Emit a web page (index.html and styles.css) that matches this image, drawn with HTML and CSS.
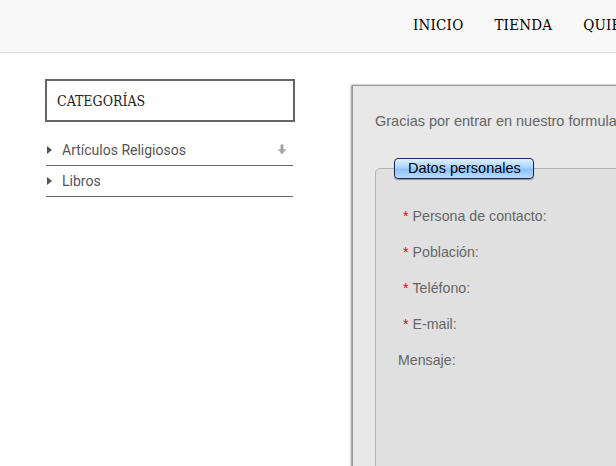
FILE: index.html
```html
<!DOCTYPE html>
<html lang="es">
<head>
<meta charset="utf-8">
<title>Contacto</title>
<link rel="stylesheet" href="styles.css">
</head>
<body>
<header class="top">
  <nav class="menu">
    <a href="#">INICIO</a>
    <a href="#">TIENDA</a>
    <a href="#">QUIÉNES SOMOS</a>
    <a href="#">CONTACTO</a>
  </nav>
</header>
<div class="page">
  <aside class="side">
    <div class="cat-title">CATEGORÍAS</div>
    <ul class="cat-list">
      <li class="cat-item">
        <span class="tri"></span>
        <span class="cat-name">Artículos Religiosos</span>
        <svg class="more" width="10" height="12" viewBox="0 0 10 12">
          <defs>
            <linearGradient id="g" x1="0" y1="0" x2="1" y2="0">
              <stop offset="0" stop-color="#c8c8c8"/>
              <stop offset="0.5" stop-color="#a0a0a0"/>
              <stop offset="1" stop-color="#c8c8c8"/>
            </linearGradient>
          </defs>
          <path d="M3.5 0.5 H6.5 V5 H9.5 L5 10.5 L0.5 5 H3.5 Z" fill="url(#g)"/>
        </svg>
      </li>
      <li class="cat-item">
        <span class="tri"></span>
        <span class="cat-name">Libros</span>
      </li>
    </ul>
  </aside>
  <main class="panel">
    <p class="intro">Gracias por entrar en nuestro formulario de contacto.</p>
    <section class="box">
      <div class="legend">Datos personales</div>
      <div class="rows">
        <div class="row req"><span class="star">*</span>Persona de contacto:</div>
        <div class="row req"><span class="star">*</span>Población:</div>
        <div class="row req"><span class="star">*</span>Teléfono:</div>
        <div class="row req"><span class="star">*</span>E-mail:</div>
        <div class="row">Mensaje:</div>
      </div>
    </section>
  </main>
</div>
</body>
</html>
```
FILE: styles.css
```css
html, body {
  margin: 0;
  padding: 0;
  background: #ffffff;
  overflow: hidden;
  width: 616px;
  height: 466px;
}

.top {
  height: 52px;
  background: #f8f8f8;
  border-bottom: 1px solid #d8d8d8;
  overflow: hidden;
}

.menu {
  display: flex;
  gap: 31px;
  padding-left: 413px;
  padding-top: 15px;
  white-space: nowrap;
}

.menu a {
  font-family: "DejaVu Serif", serif;
  font-stretch: condensed;
  font-size: 15px;
  line-height: 20px;
  letter-spacing: 0.2px;
  color: #000000;
  text-decoration: none;
}

.page {
  display: flex;
  align-items: flex-start;
  padding-left: 45px;
  padding-top: 26px;
  gap: 57px;
}

.side {
  width: 250px;
  flex: none;
}

.cat-title {
  border: 2px solid #666666;
  width: 250px;
  height: 43px;
  box-sizing: border-box;
  padding-left: 10px;
  padding-top: 1px;
  display: flex;
  align-items: center;
  font-family: "DejaVu Serif", serif;
  font-stretch: condensed;
  font-size: 14px;
  color: #222222;
}

.cat-list {
  list-style: none;
  margin: 13px 0 0 1px;
  padding: 0;
  width: 247px;
}

.cat-item {
  height: 30px;
  border-bottom: 1px solid #666666;
  display: flex;
  align-items: center;
  font-family: Roboto, "Liberation Sans", sans-serif;
  font-size: 14px;
  color: #555555;
}

.tri {
  width: 0;
  height: 0;
  border-top: 4px solid transparent;
  border-bottom: 4px solid transparent;
  border-left: 5px solid #555555;
  margin-left: 1px;
  margin-right: 10px;
}

.cat-name {
  flex: 1;
}

.more {
  margin-right: 6px;
  margin-top: -1px;
}

.panel {
  flex: none;
  width: 600px;
  height: 420px;
  margin-top: 6px;
  background: #e8e8e8;
  border: 1px solid #999999;
  box-shadow: -1px 0 2px rgba(0, 0, 0, 0.45);
  padding: 27px 0 0 22px;
  box-sizing: border-box;
  font-family: "Liberation Sans", Arial, sans-serif;
}

.intro {
  margin: 0;
  font-size: 14.5px;
  line-height: 16px;
  color: #666666;
  white-space: nowrap;
}

.box {
  margin-top: 39px;
  border: 1px solid #b4b4b4;
  border-radius: 5px;
  background: #e0e0e0;
  height: 400px;
}

.legend {
  width: fit-content;
  margin: -11px 0 0 18px;
  padding: 1px 12px 2px 13px;
  font-size: 14.5px;
  line-height: 16px;
  color: #000000;
  border: 1px solid #1c2a5a;
  border-radius: 4px;
  background: linear-gradient(#e0f0ff 0%, #a9d3ff 45%, #8cc2ff 55%, #b8dcff 100%);
  box-shadow: 0 1px 1px rgba(0, 0, 0, 0.35);
}

.rows {
  padding: 29px 0 0 22px;
}

.row {
  font-size: 14.2px;
  line-height: 16px;
  height: 36px;
  color: #666666;
  white-space: nowrap;
}

.req {
  padding-left: 5px;
}

.star {
  color: #ff0000;
  margin-right: 4px;
}
```
